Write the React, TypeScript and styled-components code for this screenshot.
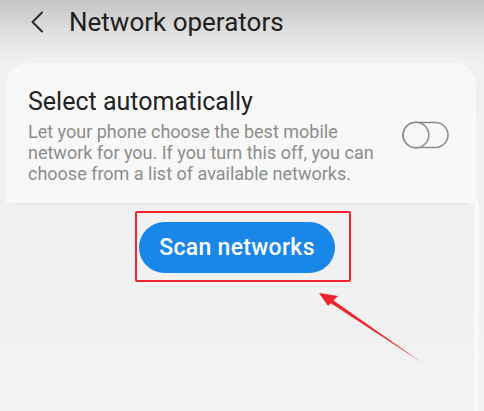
import React from "react";
import styled, { createGlobalStyle } from "styled-components";

const Global = createGlobalStyle`
  html, body { margin: 0; padding: 0; }
  body { width: 484px; height: 411px; overflow: hidden; font-family: Roboto, "Noto Sans", sans-serif; }
`;

const Screen = styled.div`
  position: relative;
  width: 484px;
  height: 411px;
  background: linear-gradient(to bottom, #c4c4c4 0px, #e2e2e2 35px, #f0f0f0 62px, #f2f2f2 100%);
  display: flex;
  flex-direction: column;
  overflow: hidden;
`;

const Header = styled.div`
  display: flex;
  align-items: center;
  height: 44px;
  padding-left: 30px;
  gap: 25px;
`;

const Title = styled.div`
  font-size: 26px;
  color: #202020;
`;

const Card = styled.div`
  margin: 19px 8px 0 6px;
  background: #f8f8f8;
  border-radius: 22px 22px 0 0;
  padding: 24px 26px 0 22px;
  height: 116px;
  position: relative;
`;

const Row = styled.div`
  display: flex;
  align-items: center;
  justify-content: space-between;
`;

const TextCol = styled.div`
  display: flex;
  flex-direction: column;
`;

const RowTitle = styled.div`
  font-size: 25px;
  color: #222;
  line-height: 30px;
`;

const RowDesc = styled.div`
  font-size: 18px;
  line-height: 21px;
  color: #8c8c8c;
  margin-top: 4px;
  width: 356px;
`;

const Divider = styled.div`
  position: absolute;
  left: 11px;
  right: 10px;
  bottom: -2px;
  height: 2px;
  background: #e4e4e4;
`;

const ButtonArea = styled.div`
  display: flex;
  justify-content: flex-start;
  padding-left: 135px;
  margin-top: 8px;
`;

const Highlight = styled.div`
  width: 210px;
  height: 67px;
  border: 2px solid #f2232a;
  border-radius: 2px;
  display: flex;
  align-items: center;
  padding-left: 2px;
  box-sizing: content-box;
`;

const ScanButton = styled.div`
  width: 196px;
  height: 51px;
  margin-top: 1px;
  border-radius: 26px;
  background: #1987e9;
  color: #fff;
  font-size: 23px;
  font-weight: 500;
  display: flex;
  align-items: center;
  justify-content: center;
  letter-spacing: 0.3px;
`;

const ArrowSvg = styled.svg`
  position: absolute;
  left: 0;
  top: 0;
  pointer-events: none;
`;

const EdgeLine = styled.div`
  position: absolute;
  top: 200px;
  bottom: 0;
  right: 5px;
  width: 5px;
  background: linear-gradient(to right, #f2f2f2, #fbfbfb, #f2f2f2);
`;

function Toggle() {
  return (
    <svg width="48" height="29" viewBox="0 0 48 29">
      <rect x="1" y="1.5" width="45" height="25" rx="12.5" fill="none" stroke="#8a8a8a" strokeWidth="1.5" />
      <circle cx="14" cy="14" r="12.8" fill="#f8f8f8" stroke="#8a8a8a" strokeWidth="1.5" />
    </svg>
  );
}

export default function App() {
  return (
    <>
      <Global />
      <Screen>
        <Header>
          <svg width="14" height="22" viewBox="0 0 14 22">
            <path d="M12 1.5 L2.5 11 L12 20.5" fill="none" stroke="#2a2a2a" strokeWidth="2" strokeLinecap="round" strokeLinejoin="round" />
          </svg>
          <Title>Network operators</Title>
        </Header>
        <Card>
          <Row>
            <TextCol>
              <RowTitle>Select automatically</RowTitle>
              <RowDesc>
                Let your phone choose the best mobile network for you. If you turn this off, you can choose from a list of available networks.
              </RowDesc>
            </TextCol>
            <Toggle />
          </Row>
          <Divider />
        </Card>
        <ButtonArea>
          <Highlight>
            <ScanButton>Scan networks</ScanButton>
          </Highlight>
        </ButtonArea>
        <EdgeLine />
        <ArrowSvg width="484" height="411" viewBox="0 0 484 411">
          <path d="M330 298 L421 362 L329 302 Z" fill="#f2232a" />
          <path d="M319 293 L338 296 L328 306 Z" fill="#f2232a" />
        </ArrowSvg>
      </Screen>
    </>
  );
}
